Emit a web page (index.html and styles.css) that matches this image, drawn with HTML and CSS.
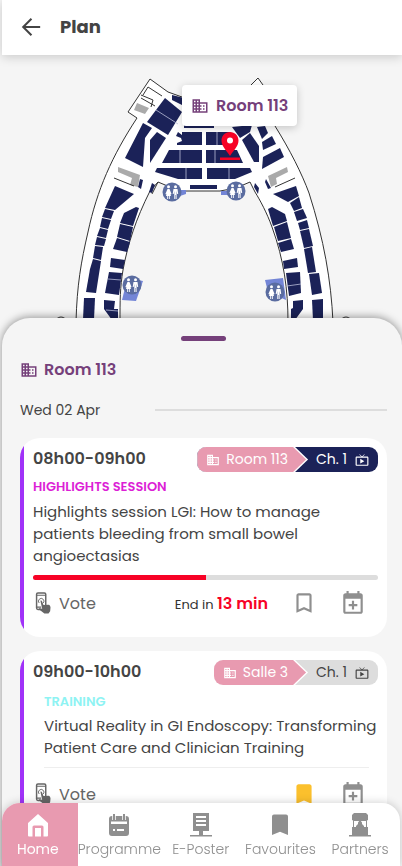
FILE: index.html
```html
<!DOCTYPE html>
<html lang="en">
<head>
    <meta charset="UTF-8">
    <meta name="viewport" content="width=device-width, initial-scale=1.0">
    <title>Plan</title>
    <link rel="stylesheet" href="styles.css">
</head>
<body>

<!-- Shared icons -->
<svg class="sprite" aria-hidden="true">
    <symbol id="building" viewBox="0 0 24 24">
        <path fill="currentColor" fill-rule="evenodd" d="M12 7V3H2v18h20V7H12zM6 19H4v-2h2v2zm0-4H4v-2h2v2zm0-4H4V9h2v2zm0-4H4V5h2v2zm4 12H8v-2h2v2zm0-4H8v-2h2v2zm0-4H8V9h2v2zm0-4H8V5h2v2zm10 12h-8v-2h2v-2h-2v-2h2v-2h-2V9h8v10zm-2-8h-2v2h2v-2zm0 4h-2v2h2v-2z"/>
    </symbol>
    <symbol id="tv" viewBox="0 0 24 24">
        <path fill="currentColor" fill-rule="evenodd" d="M9 10v8l7-4zm12-4h-7.600l3.300-3.300L16 2l-4 4-4-4-.7.700L10.600 6H3c-1.100 0-2 .9-2 2v12c0 1.100.9 2 2 2h18c1.100 0 2-.9 2-2V8c0-1.100-.9-2-2-2zm0 14H3V8h18v12z"/>
    </symbol>
    <symbol id="vote" viewBox="0 0 18 24">
        <rect x="2" y="1" width="10" height="18" rx="1.500" fill="none" stroke="currentColor" stroke-width="1.600"/>
        <path d="M2 3.500h10M2 16.500h5" stroke="currentColor" stroke-width="1.200"/>
        <path d="M4.800 12a3 3 0 1 1 4.500 0" fill="none" stroke="currentColor"/>
        <path fill="currentColor" d="M6.200 9.500c.8-.5 1.500 0 1.800.8l1.500 4 5.500-.3c1.500.3 2 1.500 2.200 3l-.4 4-1.800 2.500h-4.500L4.500 18.800c-.4-1 .6-1.400 1.500-1l2.200 1z"/>
    </symbol>
    <symbol id="bookmark" viewBox="0 0 24 24">
        <path fill="currentColor" d="M17 3H7c-1.100 0-2 .9-2 2v16l7-3 7 3V5c0-1.100-.9-2-2-2zm0 15l-5-2.200L7 18V5h10v13z"/>
    </symbol>
    <symbol id="bookmark-full" viewBox="0 0 24 24">
        <path fill="currentColor" d="M17 3H7c-1.100 0-2 .9-2 2v16l7-3 7 3V5c0-1.100-.9-2-2-2z"/>
    </symbol>
    <symbol id="calendar" viewBox="0 0 24 24">
        <path fill="currentColor" fill-rule="evenodd" d="M19 3h-1V1h-2v2H8V1H6v2H5c-1.100 0-2 .9-2 2v15c0 1.100.9 2 2 2h14c1.100 0 2-.9 2-2V5c0-1.100-.9-2-2-2zm0 17H5V8h14v12zM11 10h2v3h3v2h-3v3h-2v-3H8v-2h3z"/>
    </symbol>
    <symbol id="wc" viewBox="0 0 20 20">
        <circle cx="10" cy="10" r="9.500" fill="#5a6ca0"/>
        <g fill="#fff">
            <circle cx="6.500" cy="4.800" r="1.500"/>
            <path d="M5.500 7h2l2 5-1 .4L8 11l1 3H7.800v3h-.9v-3h-.8v3h-.9v-3H4l1-3-.6 1.400-1-.4z"/>
            <circle cx="13.500" cy="4.800" r="1.500"/>
            <path d="M11.500 7h4l.7 5h-1l-.6-3v8h-.9v-4h-.5v4h-.9V9l-.6 3h-1z"/>
        </g>
    </symbol>
</svg>

<header class="top-bar">
    <button class="back" aria-label="Back">
        <svg viewBox="0 0 24 24"><path d="M22 12H4M12.500 3L3.500 12l9 9" fill="none" stroke="currentColor" stroke-width="2.200"/></svg>
    </button>
    <h1>Plan</h1>
</header>

<main>
    <!-- Floor plan -->
    <section class="map">
        <svg class="floor" viewBox="2 55 400 263" role="img" aria-label="Floor plan">
            <path class="walls" d="M76 322C77 285 81 262 88 232C97 190 112 156 137 118L128 112L150 79L168 92L182 97L251 97V85L258 78L263 85L275 126C290 150 302 174 309 193C324 240 331 280 333 322H288C288 290 284 260 272 227C267 213 260 200 255 192L250 182L236 188L220 191H183L170 187L158 182L150 191C136 219 128 243 123 270C120 288 120 300 120 322Z"/>
            <circle class="line" cx="61" cy="323" r="6"/>
            <circle class="line" cx="346" cy="323" r="6"/>
            <g class="rooms">
                <!-- upper left -->
                <path d="M165 98L182 112L168 135L147 122Z"/>
                <path d="M172 95L184 98V106L172 100Z"/>
                <path d="M143 123L152 128L145 138L143 167L125 158Z"/>
                <path d="M157 132L166 138L150 163V140Z"/>
                <!-- central rows -->
                <path d="M184 124H214V128H184Z"/>
                <path d="M182 132H202V145H177V143L182 141L181 138L176 136L178 132L182 135Z"/>
                <path d="M206 132H230L236 145H206Z"/>
                <path d="M169 150H202V163H162Z"/>
                <path d="M206 150H237L243 163H206Z"/>
                <path d="M157 168H202V179H178L155 172Z"/>
                <path d="M207 168H250L252 172L235 179H207Z"/>
                <path d="M190 185H217V189H190Z"/>
                <path d="M140 179L143 180L141 189L138 187ZM152 183L155 185L152 193L149 192Z"/>
                <path d="M255 183L259 188L258 194L254 187ZM266 179L271 188L268 189L265 182Z"/>
                <!-- upper right -->
                <path d="M232 127L252 125L250 132L240 138Z"/>
                <path d="M242 140L250 133L259 146V162L254 162Z"/>
                <path d="M257 127L265 126L268 133L262 139Z"/>
                <path d="M262 142L272 136L276 144L263 150Z"/>
                <path d="M263 157L280 148L284 157L262 169Z"/>
                <!-- left wing, outer -->
                <path d="M115 186L134 194L115 210L105 208Z"/>
                <path d="M105 209L114 211L111 219L102 217Z"/>
                <path d="M102 218L111 220L108 229L100 227Z"/>
                <path d="M100 228L108 230L106 238L97 236Z"/>
                <path d="M97 237L106 239L104 246L95 245Z"/>
                <path d="M95 246L103 247L101 260L93 258Z"/>
                <path d="M93 259L101 261L96 293L86 292L90 269Z"/>
                <path d="M84 298H95L94 320H83Z"/>
                <!-- left wing, inner -->
                <path d="M124 213L136 207L139 208L133 226L120 223Z"/>
                <path d="M120 224L133 227L130 241L117 237Z"/>
                <path d="M117 238L130 242L127 252L113 249Z"/>
                <path d="M111 258L125 260L123 269L110 267Z"/>
                <path d="M109 272L122 273L119 295L105 293Z"/>
                <path d="M104 300L115 301L114 309H118V320H112L104 309Z"/>
                <!-- right wing, outer -->
                <path d="M273 194L296 186L299 196L288 202Z"/>
                <path d="M290 203L299 197L302 208L294 211Z"/>
                <path d="M294 212L303 209L307 218L297 221Z"/>
                <path d="M298 223L307 220L309 228L300 230Z"/>
                <path d="M300 231L309 229L313 246L304 248Z"/>
                <path d="M304 249L312 247L316 272L308 273Z"/>
                <path d="M309 274L319 273L322 293L312 295Z"/>
                <path d="M312 300L323 299V320H313Z"/>
                <!-- right wing, inner -->
                <path d="M268 209L272 207L285 214L287 221L273 226Z"/>
                <path d="M274 227L287 222L291 238L278 241Z"/>
                <path d="M278 243L291 239L294 249L281 252Z"/>
                <path d="M283 261L297 258L298 267L284 269Z"/>
                <path d="M286 273L300 272L301 293L289 296Z"/>
                <path d="M293 301L303 300V309L295 320H291V309L293 308Z"/>
            </g>
            <path class="split" d="M156 110L178 124M180 150V163M186 168V179M215 150V163M217 132V145M229 168V179M108 279L121 280M287 286L301 284M106 310L118 311"/>
            <path class="stairs" d="M118 167L140 175L138 187L130 185L132 178L118 172ZM137 103L149 108L145 114L134 110ZM268 176L287 167L288 172L276 178L277 184L271 187Z"/>
            <path class="line" d="M114 178L134 186M141 95L153 100L151 107M143 95L148 87L162 96M141 98L155 106M275 187L295 178M152 194L158 182"/>
            <g class="lobby">
                <path d="M180 190H186V194L180 196ZM221 191H228V195H221Z"/>
                <path d="M138 280L143 281L136 301L122 300L125 288Z"/>
                <path d="M265 280L283 278L286 300L268 292Z"/>
            </g>
            <use href="#wc" x="162" y="182" width="20" height="20"/>
            <use href="#wc" x="226" y="181" width="20" height="20"/>
            <use href="#wc" x="122" y="275" width="20" height="20"/>
            <use href="#wc" x="265" y="282" width="20" height="20"/>
            <path class="pin" d="M230 132C225 132 221.500 135.800 221.500 140.500C221.500 146 226 150 230 156C234 150 238.500 146 238.500 140.500C238.500 135.800 235 132 230 132ZM220 157.500H240V160H220Z"/>
            <circle class="pin-hole" cx="230" cy="140.500" r="3"/>
        </svg>
        <div class="popup">
            <svg class="icon"><use href="#building"/></svg>
            Room 113
        </div>
    </section>

    <!-- Sessions of the selected room -->
    <section class="sheet">
        <div class="handle"></div>
        <h2 class="room-title"><svg class="icon"><use href="#building"/></svg>Room 113</h2>
        <div class="day"><span>Wed 02 Apr</span></div>

        <article class="card">
            <div class="card-top">
                <time>08h00-09h00</time>
                <div class="pill live">
                    <span class="arrow"><span class="room"><svg><use href="#building"/></svg>Room 113</span></span>
                    <span class="channel">Ch. 1<svg><use href="#tv"/></svg></span>
                </div>
            </div>
            <p class="tag highlight">HIGHLIGHTS SESSION</p>
            <h3>Highlights session LGI: How to manage patients bleeding from small bowel angioectasias</h3>
            <div class="progress"><div class="bar" style="width: 50%"></div></div>
            <div class="actions">
                <button class="vote"><svg><use href="#vote"/></svg>Vote</button>
                <p class="remaining">End in <strong>13 min</strong></p>
                <button class="action" aria-label="Add to favourites"><svg><use href="#bookmark"/></svg></button>
                <button class="action" aria-label="Add to calendar"><svg><use href="#calendar"/></svg></button>
            </div>
        </article>

        <article class="card">
            <div class="card-top">
                <time>09h00-10h00</time>
                <div class="pill">
                    <span class="arrow"><span class="room"><svg><use href="#building"/></svg>Salle 3</span></span>
                    <span class="channel">Ch. 1<svg><use href="#tv"/></svg></span>
                </div>
            </div>
            <div class="talk">
                <p class="tag training">TRAINING</p>
                <h3>Virtual Reality in GI Endoscopy: Transforming Patient Care and Clinician Training</h3>
            </div>
            <div class="actions">
                <button class="vote"><svg><use href="#vote"/></svg>Vote</button>
                <button class="action saved" aria-label="Remove from favourites"><svg><use href="#bookmark-full"/></svg></button>
                <button class="action" aria-label="Add to calendar"><svg><use href="#calendar"/></svg></button>
            </div>
        </article>
    </section>
</main>

<nav class="tab-bar">
    <a href="#home" class="active">
        <svg viewBox="0 0 24 24"><path fill="currentColor" d="M12 1L22 10V22.500a1 1 0 0 1-1 1h-3.500V14a1.500 1.500 0 0 0-1.500-1.500H8A1.500 1.500 0 0 0 6.500 14v9.500H3a1 1 0 0 1-1-1V10zM9 15h6v8.500H9z"/></svg>
        Home
    </a>
    <a href="#programme">
        <svg viewBox="0 0 24 24"><path fill="currentColor" fill-rule="evenodd" d="M6 1h2v2h8V1h2v2h1a3 3 0 0 1 3 3v14a3 3 0 0 1-3 3H5a3 3 0 0 1-3-3V6a3 3 0 0 1 3-3h1zM4 8.500V11h16V8.500zM6 16v2h2v-2zM10 16v2h7v-2z"/><path d="M7 2v5M17 2v5" stroke="#fff" stroke-width="3.500"/><path d="M7 1v6M17 1v6" stroke="currentColor" stroke-width="2"/></svg>
        Programme
    </a>
    <a href="#eposter">
        <svg viewBox="0 0 24 24"><path fill="currentColor" fill-rule="evenodd" d="M4 0h16v18h-6v4h9v1.500H1V22h9v-4H4zM7 3v2h10V3zM7 7v2h10V7zM7 11v2h10v-2z"/></svg>
        E-Poster
    </a>
    <a href="#favourites">
        <svg viewBox="0 0 24 24"><path fill="currentColor" d="M6 1.500h12a2 2 0 0 1 2 2V22l-8-3.200L4 22V3.500a2 2 0 0 1 2-2z"/></svg>
        Favourites
    </a>
    <a href="#partners">
        <svg viewBox="0 0 24 24"><path fill="currentColor" d="M6 0h12l2 2v5l-2 1H6L4 7V2zM5 7h1v8H5zM18 7h1v8h-1zM4 14h4v-1l2-2V9.500L12 7l2 2.500V11l2 2v1h4v8h3v1.500H1V22h3z"/></svg>
        Partners
    </a>
</nav>

</body>
</html>
```

FILE: styles.css
```css
* {
    box-sizing: border-box;
}

body {
    margin: 0;
    padding-left: 2px;
    height: 100vh;
    overflow: hidden;
    background-color: #f5f5f5;
    color: #444;
    font-family: Poppins, Inter, sans-serif;
    font-size: 16px;
}

h1, h2, h3, p {
    margin: 0;
}

button {
    padding: 0;
    border: none;
    background: none;
    color: inherit;
    font: inherit;
    cursor: pointer;
}

svg {
    display: block;
    flex-shrink: 0;
}

.sprite {
    display: none;
}

.top-bar {
    position: relative;
    display: flex;
    align-items: center;
    gap: 18px;
    height: 55px;
    padding: 0 18px 2px;
    background-color: #fff;
    box-shadow: 0 2px 10px rgba(0, 0, 0, 0.18);
}

.back svg {
    width: 22px;
    height: 22px;
}

h1 {
    font-size: 18px;
    font-weight: 700;
    line-height: 24px;
}

.map {
    position: relative;
}

.floor {
    width: 100%;
}

.walls {
    fill: #fff;
    stroke: #333;
}

.line {
    fill: none;
    stroke: #333;
}

.rooms {
    fill: #1b2258;
}

.split {
    stroke: #b9bdd8;
    stroke-width: 0.8;
}

.stairs {
    fill: #aaa;
}

.lobby {
    fill: #7385d6;
}

.pin {
    fill: #f70226;
}

.pin-hole {
    fill: #fff;
}

/* label above the pin */
.popup {
    position: absolute;
    top: 30px;
    left: 45%;
    display: flex;
    align-items: center;
    gap: 7px;
    height: 41px;
    padding: 0 9px;
    border-radius: 4px;
    background-color: #fff;
    box-shadow: 0 2px 8px rgba(0, 0, 0, 0.2);
    color: #75407a;
    font-weight: 600;
}

.icon {
    width: 18px;
    height: 18px;
}

.sheet {
    position: relative;
    padding: 18px 15px 80px 18px;
    border-radius: 28px 28px 0 0;
    background-color: #f5f5f5;
    box-shadow: 0 -1px 8px rgba(0, 0, 0, 0.4);
}

.handle {
    width: 45px;
    height: 5px;
    margin: 0 auto;
    border-radius: 3px;
    background-color: #75407a;
}

.room-title {
    display: flex;
    align-items: center;
    gap: 6px;
    margin-top: 17px;
    color: #75407a;
    font-size: 16px;
    font-weight: 600;
    line-height: 24px;
}

.day {
    display: grid;
    grid-template-columns: 135px 1fr;
    align-items: center;
    margin: 18px 0;
    font-size: 14px;
    line-height: 20px;
}

.day::after {
    content: "";
    height: 2px;
    background-color: #ddd;
}

.card {
    margin-bottom: 14px;
    padding: 8px 9px 22px 13px;
    border-radius: 20px;
    background: linear-gradient(to right, #a032f8 4px, #fff 4px);
}

.card-top {
    display: flex;
    justify-content: space-between;
    height: 26px;
}

time {
    font-weight: 600;
    line-height: 26px;
}

.pill {
    display: flex;
    height: 25px;
    margin-top: 1px;
    border-radius: 9px;
    overflow: hidden;
    background-color: #ddd;
    font-size: 14px;
    line-height: 25px;
}

.pill svg {
    width: 14px;
    height: 14px;
}

.live {
    background-color: #1b2258;
    color: #fff;
}

.arrow {
    padding-right: 2px;
    background-color: #fff;
}

.room {
    display: flex;
    align-items: center;
    gap: 6px;
    padding: 0 18px 0 9px;
    background-color: #e89ab0;
    color: #fff;
}

.arrow, .room {
    clip-path: polygon(0 0, calc(100% - 13px) 0, 100% 50%, calc(100% - 13px) 100%, 0 100%);
}

.channel {
    display: flex;
    align-items: center;
    gap: 8px;
    padding: 0 9px 0 8px;
}

.tag {
    font-size: 13px;
    font-weight: 600;
    line-height: 20px;
}

.card .highlight {
    margin: 5px 0 4px;
    color: #dc1fd6;
}

.training {
    color: #8ef3f3;
}

h3 {
    font-size: 15px;
    font-weight: 400;
    line-height: 22px;
}

.progress {
    height: 5px;
    margin-top: 8px;
    border-radius: 3px;
    overflow: hidden;
    background-color: #ddd;
}

.bar {
    height: 100%;
    background-color: #f70226;
}

.talk {
    margin: 7px 0 0 11px;
}

.talk h3 {
    margin-top: 3px;
}

.talk::after {
    content: "";
    display: block;
    height: 1px;
    margin: 8px 9px 0 0;
    background-color: #eee;
}

.actions {
    display: flex;
    align-items: center;
    height: 24px;
    margin-top: 11px;
    color: #666;
}

.talk + .actions {
    margin-top: 14px;
}

.vote {
    display: flex;
    align-items: center;
    gap: 6px;
    margin-right: auto;
}

.vote svg {
    width: 20px;
    height: 22px;
}

.remaining {
    font-size: 13px;
    color: #333;
}

.remaining strong {
    color: #f70226;
    font-size: 16px;
    font-weight: 600;
}

.action {
    margin-left: 23px;
    color: #8f8f8f;
}

.action:last-child {
    margin-right: 12px;
}

.action svg {
    width: 26px;
    height: 26px;
}

.saved {
    color: #fbc02d;
}

.tab-bar {
    position: fixed;
    left: 2px;
    right: 2px;
    bottom: 0;
    display: grid;
    grid-template-columns: 19fr 20fr 20fr 20fr 20fr;
    height: 63px;
    border-radius: 18px 18px 0 0;
    overflow: hidden;
    background-color: #fff;
    box-shadow: 0 0 10px rgba(0, 0, 0, 0.2);
}

.tab-bar a {
    display: flex;
    flex-direction: column;
    align-items: center;
    gap: 1px;
    padding-top: 10px;
    color: #8f8f8f;
    font-size: 14px;
    font-weight: 300;
    line-height: 22px;
    text-decoration: none;
}

.tab-bar svg {
    width: 24px;
    height: 24px;
}

.tab-bar .active {
    padding-right: 4px;
    background-color: #e89ab0;
    color: #fff;
    font-weight: 400;
}
```
